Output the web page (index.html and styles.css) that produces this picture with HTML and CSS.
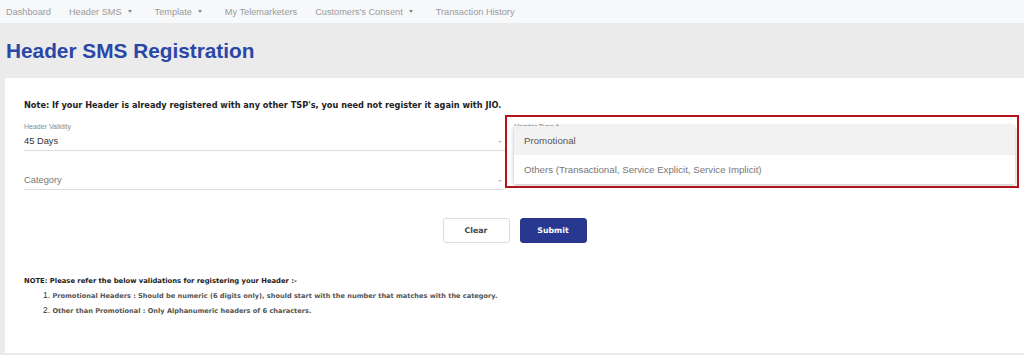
FILE: index.html
```html
<!DOCTYPE html>
<html lang="en">
<head>
    <meta charset="UTF-8">
    <title>Header SMS Registration</title>
    <link rel="stylesheet" href="styles.css">
</head>
<body>
    <!-- top navigation -->
    <nav class="topnav">
        <span class="nav-item">Dashboard</span>
        <span class="nav-item has-caret">Header SMS</span>
        <span class="nav-item has-caret">Template</span>
        <span class="nav-item">My Telemarketers</span>
        <span class="nav-item has-caret">Customers's Consent</span>
        <span class="nav-item">Transaction History</span>
    </nav>

    <div class="page-head">
        <h1>Header SMS Registration</h1>
    </div>

    <div class="card">
        <p class="note">Note: If your Header is already registered with any other TSP's, you need not register it again with JIO.</p>

        <div class="form-grid">
            <div class="col">
                <div class="field">
                    <label>Header Validity</label>
                    <div class="select-value">45 Days</div>
                </div>
                <div class="field">
                    <label>&nbsp;</label>
                    <div class="select-value placeholder">Category</div>
                </div>
            </div>

            <div class="col col-right">
                <div class="field">
                    <label>Header Type *</label>
                    <div class="select-value placeholder">&nbsp;</div>
                </div>
                <!-- open dropdown -->
                <ul class="dropdown">
                    <li class="active">Promotional</li>
                    <li>Others (Transactional, Service Explicit, Service Implicit)</li>
                </ul>
                <div class="highlight"></div>
            </div>
        </div>

        <div class="actions">
            <button class="btn btn-clear">Clear</button>
            <button class="btn btn-submit">Submit</button>
        </div>

        <div class="rules">
            <p class="rules-title">NOTE: Please refer the below validations for registering your Header :-</p>
            <div class="rule"><span class="num">1.</span> Promotional Headers : Should be numeric (6 digits only), should start with the number that matches with the category.</div>
            <div class="rule"><span class="num">2.</span> Other than Promotional : Only Alphanumeric headers of 6 characters.</div>
        </div>
    </div>
</body>
</html>
```

FILE: styles.css
```css
body { margin: 0; background: #ebebeb; font-family: "Liberation Sans", Arial, sans-serif; color: #333; }

/* nav */
.topnav { height: 23px; background: #f7f8fa; display: flex; align-items: center; gap: 18px; padding-left: 6px; box-sizing: border-box; }
.nav-item { font-size: 9.2px; color: #9a9a9a; white-space: nowrap; }
.has-caret { padding-right: 5px; }
.has-caret::after { content: ""; display: inline-block; margin-left: 6px; vertical-align: 2px; border-left: 2.5px solid transparent; border-right: 2.5px solid transparent; border-top: 3px solid #8a8a8a; }

.page-head { height: 55px; display: flex; align-items: center; padding-left: 6px; }
.page-head h1 { margin: 0; font-size: 20.8px; font-weight: bold; color: #2a47a6; line-height: 24px; }

/* card */
.card { margin-left: 5px; background: #fff; height: 275px; box-sizing: border-box; padding: 21px 10px 0 19px; }
.note { margin: 0; font-family: "DejaVu Sans", Verdana, sans-serif; font-weight: bold; font-size: 8.2px; line-height: 12px; color: #222; }

.form-grid { display: grid; grid-template-columns: 481px 1fr; gap: 9px; margin-top: 11px; }
.col { position: relative; }
.field { border-bottom: 1px solid #dcdcdc; }
.field + .field { margin-top: 10px; }
.field label { display: block; font-size: 7px; line-height: 9px; color: #8a8a8a; }
.select-value { position: relative; margin-top: 4px; padding-bottom: 2px; font-size: 9.3px; line-height: 13px; color: #333; }
.select-value.placeholder { color: #777; }
.select-value::after { content: ""; position: absolute; right: 3px; top: 6px; border-left: 2px solid transparent; border-right: 2px solid transparent; border-top: 2px solid #bbb; }

.dropdown { position: absolute; top: 4px; left: 0; right: -1px; margin: 0; padding: 0; list-style: none; background: #fff; box-shadow: 0 1px 4px rgba(0, 0, 0, 0.28); border-radius: 2px; }
.dropdown li { height: 29px; line-height: 29px; padding-left: 10px; font-size: 9.7px; color: #777; }
.dropdown li.active { background: #f2f2f2; color: #555; }
.highlight { position: absolute; left: -9px; top: -7px; width: 514px; height: 73px; box-sizing: border-box; border: 2px solid #b3141c; }

/* buttons */
.actions { display: flex; justify-content: center; gap: 10px; margin-top: 28px; padding-right: 9px; }
.btn { width: 67px; height: 25px; border-radius: 3px; font-family: "DejaVu Sans", Verdana, sans-serif; font-weight: bold; font-size: 7.8px; cursor: pointer; }
.btn-clear { background: #fff; border: 1px solid #dcdcdc; color: #444; }
.btn-submit { background: #283891; border: 1px solid #283891; color: #fff; }

/* validation notes */
.rules { margin-top: 33px; font-family: "DejaVu Sans", Verdana, sans-serif; font-weight: bold; }
.rules-title { margin: 0; font-size: 6.8px; line-height: 10px; color: #222; }
.rule { margin-top: 2.5px; padding-left: 19px; font-size: 6.6px; line-height: 12px; color: #555; }
.rule .num { font-family: "Liberation Sans", Arial, sans-serif; font-weight: normal; font-size: 8.5px; color: #333; }
```
